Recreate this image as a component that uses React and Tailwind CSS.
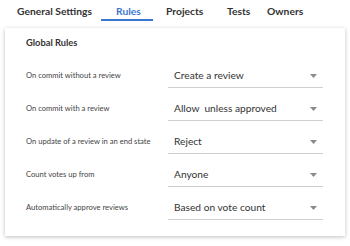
import React from "react";

const rows = [
  ["On commit without a review", "Create a review"],
  ["On commit with a review", "Allow  unless approved"],
  ["On update of a review in an end state", "Reject"],
  ["Count votes up from", "Anyone"],
  ["Automatically approve reviews", "Based on vote count"],
];

function Arrow() {
  return (
    <svg width="7" height="4" viewBox="0 0 7 4" className="shrink-0 mb-[4px]">
      <path d="M0 0 H7 L3.5 4 Z" fill="#8a8a8a" />
    </svg>
  );
}

export default function App() {
  return (
    <div
      className="w-[350px] h-[246px] bg-white overflow-hidden"
      style={{ fontFamily: "Lato, 'Open Sans', sans-serif" }}
    >
      <div className="flex h-[28px] items-start pt-[4px] pl-[17px] text-[10.3px] font-bold text-[#333]">
        <div className="w-[99px] leading-[14px]">General Settings</div>
        <div className="relative w-[50px] leading-[14px] text-[#3b77cf]">
          Rules
          <span className="absolute left-[-15px] top-[15px] h-[2px] w-[52px] bg-[#3b77cf]" />
        </div>
        <div className="w-[61px] leading-[14px]">Projects</div>
        <div className="w-[40px] leading-[14px]">Tests</div>
        <div className="leading-[14px]">Owners</div>
      </div>
      <div className="mx-[5px] w-[340px] h-[208px] bg-white shadow-[0_1px_4px_rgba(0,0,0,0.25)] pl-[21px] pr-[22px] pt-[9px]">
        <div className="text-[9.3px] font-bold text-[#333] leading-[12px]">Global Rules</div>
        <div className="flex flex-col mt-[6px]">
          {rows.map(([label, value]) => (
            <div key={label} className="flex h-[33px]">
              <div className="w-[142px] flex items-end pb-[8px] text-[7.6px] leading-[10px] text-[#444]">{label}</div>
              <div className="flex-1 h-full flex items-end justify-between border-b border-[#cfcfcf] pl-[6px] pr-[6px] pb-[5px]">
                <span className="text-[10.2px] leading-[13px] text-[#333] whitespace-pre">{value}</span>
                <Arrow />
              </div>
            </div>
          ))}
        </div>
      </div>
    </div>
  );
}
